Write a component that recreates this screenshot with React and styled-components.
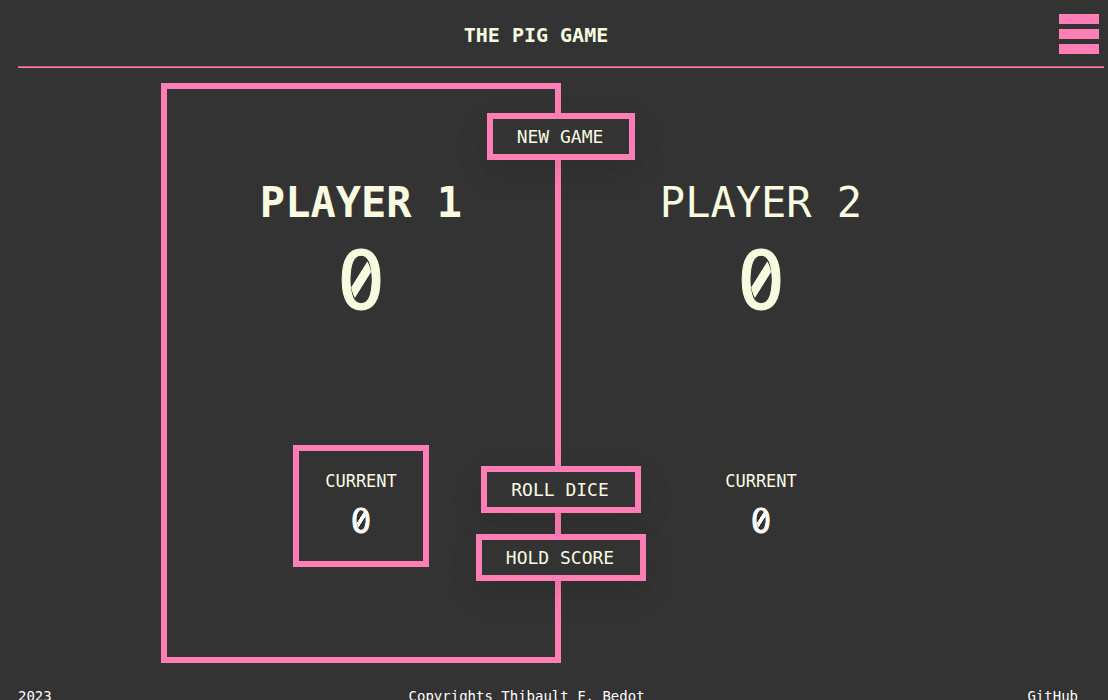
import React from "react";
import styled, { createGlobalStyle } from "styled-components";

const pink = "#ff7eb6";
const cream = "#f9fbe0";
const dark = "#333333";

const GlobalStyle = createGlobalStyle`
  *, *::before, *::after { box-sizing: border-box; }
  html { scrollbar-width: none; background: ${dark}; }
  body {
    margin: 0;
    background: ${dark};
    color: #ffffff;
    font-family: Menlo, "DejaVu Sans Mono", monospace;
  }
`;

const Header = styled.header`
  display: flex;
  justify-content: space-between;
  align-items: flex-start;
  height: 66px;
  padding: 14px 9px 0 13px;

  &::before { content: ""; }
`;

const Title = styled.h1`
  margin: 0;
  color: ${cream};
  font-size: 20px;
  line-height: 42px;
`;

const MenuButton = styled.button`
  display: flex;
  flex-direction: column;
  gap: 5px;
  width: 40px;
  padding: 0;
  border: 0;
  background: none;
  cursor: pointer;
`;

const MenuBar = styled.span`
  height: 10px;
  background: ${pink};
`;

const Divider = styled.hr`
  height: 2px;
  margin: 0 4px 0 18px;
  border: 0;
  border-top: 1px solid #c55a88;
  background: ${pink};
`;

const Main = styled.main`
  padding: 15px 0 0 14px;
`;

const Board = styled.div`
  position: relative;
  display: grid;
  grid-template-columns: 1fr 1fr;
  max-width: 800px;
  min-height: 580px;
  margin: 0 auto;
`;

const Panel = styled.section`
  display: flex;
  flex-direction: column;
  align-items: center;
  padding: 89px 24px 90px;
  border: 6px solid ${(p) => (p.$active ? pink : "transparent")};
`;

const PlayerName = styled.h2`
  margin: 0;
  color: ${cream};
  font-size: 42px;
  font-weight: ${(p) => (p.$active ? 700 : 400)};
  line-height: 50px;
`;

const Points = styled.p`
  position: relative;
  margin: 6px 0 0;
  -webkit-text-stroke: 1px currentColor;
`;

/* Fills the inside of a zero with a diagonal bar, scaled with the digit. */
const Slashed = styled.span`
  &::after {
    content: "";
    position: absolute;
    top: calc(50% - 0.03em);
    left: 50%;
    width: 0.26em;
    height: 0.57em;
    border-radius: 50%;
    background: linear-gradient(
      122deg,
      ${dark} calc(50% - 0.06em),
      currentColor calc(50% - 0.05em),
      currentColor calc(50% + 0.05em),
      ${dark} calc(50% + 0.06em)
    );
    transform: translate(-50%, -50%);
  }
`;

const Score = styled(Points)`
  color: ${cream};
  font-size: 80px;
  line-height: 96px;
`;

const CurrentBox = styled.div`
  display: flex;
  flex-direction: column;
  align-items: center;
  width: 136px;
  height: 122px;
  margin-top: auto;
  padding: 18px 0;
  border: 6px solid ${(p) => (p.$active ? pink : "transparent")};
`;

const CurrentLabel = styled.h3`
  margin: 0;
  color: ${cream};
  font-size: 17px;
  font-weight: 400;
  line-height: 24px;
`;

const CurrentScore = styled(Points)`
  font-size: 34px;
  line-height: 44px;
`;

const Controls = styled.div`
  position: absolute;
  inset: 0;
  display: flex;
  flex-direction: column;
  align-items: center;
  gap: 21px;
  padding: 30px 0 82px;
  pointer-events: none;
`;

const GameButton = styled.button`
  height: 47px;
  padding: 0 26px 0 24px;
  border: 6px solid ${pink};
  background: ${dark};
  box-shadow: 0 12px 32px rgba(0, 0, 0, 0.1);
  color: ${cream};
  font: inherit;
  font-size: 18px;
  line-height: 24px;
  pointer-events: auto;
  cursor: pointer;

  &:first-child { margin-bottom: auto; }
`;

const Footer = styled.footer`
  display: flex;
  justify-content: space-between;
  margin-top: 25px;
  padding: 0 30px 16px 18px;
  font-size: 14px;
  line-height: 16px;
`;

const FooterText = styled.span``;

const FooterLink = styled.a`
  padding-left: 26px;
  color: inherit;
  text-decoration: none;
`;

function Digits({ value }) {
  return value === 0 ? <Slashed>0</Slashed> : value;
}

function Player({ name, score, current, active }) {
  return (
    <Panel $active={active}>
      <PlayerName $active={active}>{name}</PlayerName>
      <Score>
        <Digits value={score} />
      </Score>
      <CurrentBox $active={active}>
        <CurrentLabel>CURRENT</CurrentLabel>
        <CurrentScore>
          <Digits value={current} />
        </CurrentScore>
      </CurrentBox>
    </Panel>
  );
}

export default function App() {
  return (
    <>
      <GlobalStyle />
      <Header>
        <Title>THE PIG GAME</Title>
        <MenuButton type="button" aria-label="Menu">
          <MenuBar />
          <MenuBar />
          <MenuBar />
        </MenuButton>
      </Header>
      <Divider />
      <Main>
        <Board>
          <Player name="PLAYER 1" score={0} current={0} active />
          <Player name="PLAYER 2" score={0} current={0} />
          <Controls>
            <GameButton type="button">NEW GAME</GameButton>
            <GameButton type="button">ROLL DICE</GameButton>
            <GameButton type="button">HOLD SCORE</GameButton>
          </Controls>
        </Board>
      </Main>
      <Footer>
        <FooterText>2023</FooterText>
        <FooterText>Copyrights Thibault F. Bedot</FooterText>
        <FooterLink href="#github">GitHub</FooterLink>
      </Footer>
    </>
  );
}
